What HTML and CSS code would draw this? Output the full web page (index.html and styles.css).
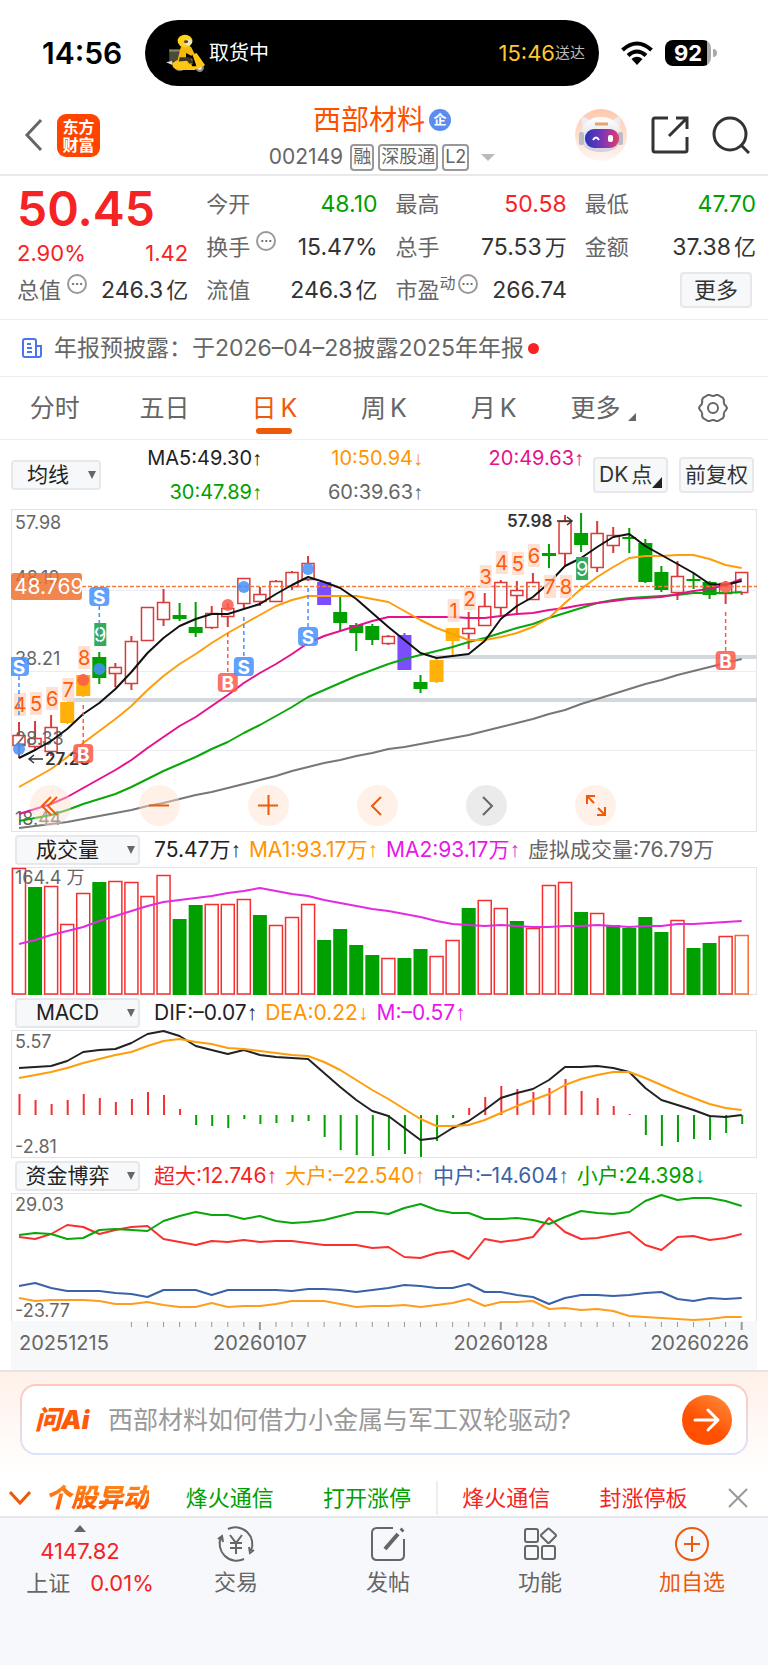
FILE: index.html
```html
<!DOCTYPE html>
<html lang="zh-CN">
<head>
  <meta charset="UTF-8">
  <meta name="viewport" content="width=device-width, initial-scale=1.0">
  <title>西部材料 002149</title>
  <link rel="stylesheet" href="styles.css">
</head>
<body>

  <div class="status-bar">
    <span class="clock">14:56</span>
    <div class="island">
      <svg class="rider" viewBox="0 0 38 54" preserveAspectRatio="none">
        <path d="M4 22h12v17H4z" fill="#4a4a38"/>
        <path d="M4 22h12v3H4z" fill="#8a8462"/>
        <path d="M1 40l6-2v6z" fill="#ddd"/>
        <ellipse cx="14" cy="47" rx="5" ry="6" fill="#666"/>
        <ellipse cx="33" cy="48" rx="4" ry="6" fill="#888"/>
        <ellipse cx="33" cy="48" rx="2" ry="3" fill="#eee"/>
        <path d="M7 41q7-8 16-3l3 8h4l-4-17 4-2 7 15q2 3-1 4l-8 5H13q-7-2-6-10z" fill="#fdc814"/>
        <path d="M15 18q6-5 10 1l3 9-3 3-5-4v8h6v8h-4l-2-5-8-1z" fill="#f4b90c"/>
        <path d="M14 33h10l3 9h-4l-2-4-8 1z" fill="#3a3420"/>
        <ellipse cx="19" cy="10" rx="7" ry="9" fill="#ffd21c"/>
        <path d="M20 8q6-1 6 3-1 5-5 5-4-2-1-8z" fill="#eee7c5"/>
        <circle cx="20" cy="11" r="2" fill="#4d4420"/>
      </svg>
      <span class="island-title">取货中</span>
      <span class="island-time">15:46</span>
      <span class="island-note">送达</span>
    </div>
    <svg class="wifi" viewBox="0 0 32 24">
      <g fill="none" stroke="#000" stroke-width="4">
        <path d="M1.500 9Q16-4 30.500 9"/>
        <path d="M7 14.500Q16 6.500 25 14.500"/>
      </g>
      <path d="M10.500 18Q16 13.500 21.500 18L16 24z"/>
    </svg>
    <div class="battery">92</div>
  </div>

  <header class="header">
    <div class="header-left">
      <button class="icon-button" aria-label="返回">
        <svg width="20" height="34" viewBox="0 0 20 34"><path d="M17 2L3 17l14 15" fill="none" stroke="#666" stroke-width="3"/></svg>
      </button>
      <a class="brand" href="#">东方<br>财富</a>
    </div>
    <div class="stock">
      <h1>西部材料<span class="badge">企</span></h1>
      <div class="code">002149<span class="tag">融</span><span class="tag">深股通</span><span class="tag">L2</span><i class="down"></i></div>
    </div>
    <div class="header-right">
      <button class="icon-button" aria-label="助手">
        <svg width="54" height="56" viewBox="0 0 54 56">
          <defs>
            <linearGradient id="halo" x2="0" y2="1"><stop offset="0" stop-color="#ffc7ac"/><stop offset="1" stop-color="#fff6f2"/></linearGradient>
            <linearGradient id="visor"><stop offset="0" stop-color="#2b35b8"/><stop offset=".5" stop-color="#7a35b8"/><stop offset="1" stop-color="#e83b6c"/></linearGradient>
            <linearGradient id="shell" x2="0" y2="1"><stop offset="0" stop-color="#fff"/><stop offset="1" stop-color="#cfd0dc"/></linearGradient>
          </defs>
          <circle cx="27" cy="28" r="26" fill="url(#halo)"/>
          <path d="M9 22Q6 12 9 9q6 3 9 8zM45 22q3-10 0-13-6 3-9 8z" fill="#ececf3"/>
          <path d="M27 10c13 0 20 8 20 20 0 10-8 15-20 15S7 40 7 30c0-12 7-20 20-20z" fill="url(#shell)"/>
          <rect x="5" y="25" width="5" height="13" rx="2" fill="#b9bbc9"/>
          <rect x="44" y="25" width="5" height="13" rx="2" fill="#b9bbc9"/>
          <path d="M21 17h13" stroke="#e8a468" stroke-width="3"/>
          <rect x="11" y="22" width="34" height="19" rx="9" fill="url(#visor)"/>
          <path d="M19 33q3-5 6 0" fill="none" stroke="#fff" stroke-width="2"/>
          <rect x="34" y="28" width="5" height="7" rx="2" fill="#fff"/>
        </svg>
      </button>
      <button class="icon-button" aria-label="分享">
        <svg width="38" height="38" viewBox="0 0 38 38"><path d="M17 2H4Q2 2 2 4v30q0 2 2 2h30q2 0 2-2V21M25 2h11v11M36 2L18 20" fill="none" stroke="#333" stroke-width="3"/></svg>
      </button>
      <button class="icon-button" aria-label="搜索">
        <svg width="38" height="38" viewBox="0 0 38 38"><circle cx="18" cy="18" r="16" fill="none" stroke="#333" stroke-width="3"/><path d="M29 29l8 8" stroke="#333" stroke-width="3"/></svg>
      </button>
    </div>
  </header>

  <section class="quote">
    <div class="price">
      <strong>50.45</strong>
      <div class="change"><span>2.90%</span><span>1.42</span></div>
    </div>
    <div class="item"><span>今开</span><b class="green">48.10</b></div>
    <div class="item"><span>最高</span><b class="red">50.58</b></div>
    <div class="item"><span>最低</span><b class="green">47.70</b></div>
    <div class="item"><span>换手<i class="hint">···</i></span><b>15.47%</b></div>
    <div class="item"><span>总手</span><b>75.53<em>万</em></b></div>
    <div class="item"><span>金额</span><b>37.38<em>亿</em></b></div>
    <div class="item"><span>总值<i class="hint">···</i></span><b>246.3<em>亿</em></b></div>
    <div class="item"><span>流值</span><b>246.3<em>亿</em></b></div>
    <div class="item"><span>市盈<sup>动</sup><i class="hint tight">···</i></span><b>266.74</b></div>
    <div class="item more"><button class="box-button">更多</button></div>
  </section>

  <a class="report" href="#">
    <svg width="22" height="22" viewBox="0 0 22 22" fill="none" stroke="#4a74f0" stroke-width="2"><path d="M15 20V4q0-2-2-2H4Q2 2 2 4v14q0 2 2 2h14q2 0 2-2V9h-5M6 7h4M6 11h5M6 15h5"/></svg>
    <span>年报预披露：于2026–04–28披露2025年年报</span>
    <i class="dot"></i>
  </a>

  <nav class="tabs">
    <button>分时</button>
    <button>五日</button>
    <button class="active">日<em>K</em></button>
    <button>周<em>K</em></button>
    <button>月<em>K</em></button>
    <button>更多<i class="corner"></i></button>
    <button aria-label="设置">
      <svg width="30" height="30" viewBox="0 0 30 30" fill="none" stroke="#666" stroke-width="2"><path d="M10 2h2q3 2 6 0h2l5 3 1 2q-1 4 2 6l1 2-1 2q-3 2-2 6l-1 2-5 3h-2q-3-2-6 0h-2l-5-3-1-2q1-4-2-6l-1-2 1-2q3-2 2-6l1-2z"/><circle cx="15" cy="15" r="5"/></svg>
    </button>
  </nav>

  <div class="ma-bar">
    <div class="picker small"><select aria-label="主图指标"><option>均线</option></select></div>
    <div class="ma-values">
      <span class="black">MA5:49.30<i>↑</i></span>
      <span class="orange">10:50.94<i>↓</i></span>
      <span class="pink">20:49.63<i>↑</i></span>
      <span class="green">30:47.89<i>↑</i></span>
      <span class="gray">60:39.63<i>↑</i></span>
    </div>
    <button class="box-button dk">DK<em>点</em><i class="corner"></i></button>
    <button class="box-button">前复权</button>
  </div>

  <main class="charts">
    <div class="kline">
      <svg id="kline" viewBox="0 0 746 323"></svg>
      <div class="tools">
        <button aria-label="最早"><svg viewBox="0 0 41 41"><path d="M21 12l-9 9 9 9M27 12l-9 9 9 9"/></svg></button>
        <button aria-label="缩小"><svg viewBox="0 0 41 41"><path d="M10 20.500h20"/></svg></button>
        <button aria-label="放大"><svg viewBox="0 0 41 41"><path d="M10 20.500h20M20.500 10v20"/></svg></button>
        <button aria-label="向左"><svg viewBox="0 0 41 41"><path d="M24 12l-9 9 9 9"/></svg></button>
        <button aria-label="向右" class="off"><svg viewBox="0 0 41 41"><path d="M17 12l9 9-9 9"/></svg></button>
        <button aria-label="全屏"><svg viewBox="0 0 41 41"><path d="M12 19v-8h8M12 11l7 7M30 22v8h-8M30 30l-7-7"/></svg></button>
      </div>
    </div>

    <div class="legend">
      <div class="picker"><select aria-label="副图一"><option>成交量</option></select></div>
      <span class="black">75.47万<i>↑</i></span>
      <span class="orange">MA1:93.17万<i>↑</i></span>
      <span class="magenta">MA2:93.17万<i>↑</i></span>
      <span class="gray">虚拟成交量:76.79万</span>
    </div>
    <svg id="volume" viewBox="0 0 746 128"></svg>

    <div class="legend">
      <div class="picker"><select aria-label="副图二"><option>MACD</option></select></div>
      <span class="black">DIF:–0.07<i>↑</i></span>
      <span class="orange">DEA:0.22<i>↓</i></span>
      <span class="magenta">M:–0.57<i>↑</i></span>
    </div>
    <svg id="macd" viewBox="0 0 746 128"></svg>

    <div class="legend">
      <div class="picker"><select aria-label="副图三"><option>资金博弈</option></select></div>
      <span class="red">超大:12.746<i>↑</i></span>
      <span class="orange">大户:–22.540<i>↑</i></span>
      <span class="blue">中户:–14.604<i>↑</i></span>
      <span class="green">小户:24.398<i>↓</i></span>
    </div>
    <svg id="fund" viewBox="0 0 746 128"></svg>
    <svg id="axis" viewBox="0 0 746 49"></svg>
  </main>

  <section class="ask">
    <form class="ask-box">
      <label for="question">问Ai</label>
      <input id="question" type="text" placeholder="西部材料如何借力小金属与军工双轮驱动?">
      <button type="button" aria-label="提问"><svg width="28" height="28" viewBox="0 0 28 28"><path d="M2 14h23M15 4l10 10-10 10" fill="none" stroke="#fff" stroke-width="3" stroke-linecap="round" stroke-linejoin="round"/></svg></button>
    </form>
  </section>

  <section class="ticker">
    <button class="icon-button" aria-label="收起"><svg width="22" height="14" viewBox="0 0 22 14"><path d="M1 1l10 11L21 1" fill="none" stroke="#ee5a0a" stroke-width="3"/></svg></button>
    <strong>个股异动</strong>
    <a class="ticker-item green" href="#"><span>烽火通信</span><span>打开涨停</span></a>
    <a class="ticker-item red" href="#"><span>烽火通信</span><span>封涨停板</span></a>
    <button class="icon-button close" aria-label="关闭"><svg width="20" height="20" viewBox="0 0 20 20"><path d="M1 1l18 18M19 1L1 19" stroke="#999" stroke-width="2"/></svg></button>
  </section>

  <footer class="bottom">
    <a class="index" href="#">
      <i class="up"></i>
      <span class="red">4147.82</span>
      <span class="index-row"><span>上证</span><span class="red">0.01%</span></span>
    </a>
    <a href="#">
      <svg viewBox="0 0 38 38"><path d="M11 4a17 17 0 0 1 23 22M27 34A17 17 0 0 1 4 12M1 14l4-3 1 6M37 25l-4 3-1-6M13 10l6 8 6-8M19 18v11M13 18h12M13 23h12"/></svg>
      交易
    </a>
    <a href="#">
      <svg viewBox="0 0 38 38"><path d="M24 3H8Q3 3 3 8v22q0 5 5 5h22q5 0 5-5V14"/><path d="M16 24L29 9M32 6l2-2" stroke-width="4"/></svg>
      发帖
    </a>
    <a href="#">
      <svg viewBox="0 0 38 38"><rect x="4" y="4" width="13" height="13" rx="2"/><rect x="4" y="21" width="13" height="13" rx="2"/><rect x="21" y="21" width="13" height="13" rx="2"/><path d="M26.500 4q1-1 2 0l6 5.500q1 1 0 2l-6 6q-1 1-2 0l-6-6q-1-1 0-2z"/></svg>
      功能
    </a>
    <a class="add" href="#">
      <svg viewBox="0 0 38 38"><circle cx="19" cy="19" r="16"/><path d="M11 19h16M19 11v16"/></svg>
      加自选
    </a>
  </footer>

  <script src="charts.js"></script>
</body>
</html>
```

FILE: styles.css
```css
* {
  box-sizing: border-box;
}

body {
  margin: 0;
  min-height: 100vh;
  display: flex;
  flex-direction: column;
  font-family: Inter, 'Noto Sans CJK SC', sans-serif;
  font-size: 22px;
  line-height: 30px;
  color: #333;
  background: #fff;
}

button, select, input {
  font: inherit;
  color: inherit;
  margin: 0;
  padding: 0;
  border: none;
  background: none;
}

a {
  color: inherit;
  text-decoration: none;
}

i, em {
  font-style: normal;
}

svg {
  display: block;
}

.red { color: #f52323; }
.green { color: #00a000; }
.orange { color: #ff9500; }
.pink { color: #e6118c; }
.magenta { color: #e817e8; }
.blue { color: #3a62a8; }
.gray { color: #666; }
.black { color: #222; }

/* Status bar */
.status-bar {
  display: flex;
  align-items: center;
  height: 100px;
  padding: 6px 57px 0 42px;
}

.clock {
  width: 103px;
  font-size: 30px;
  font-weight: 600;
  color: #000;
}

.island {
  flex: 1;
  display: flex;
  align-items: center;
  height: 66px;
  padding: 0 14px 0 20px;
  border-radius: 33px;
  background: #000;
  color: #fff;
  font-size: 20px;
}

.rider {
  width: 40px;
  height: 38px;
  margin-right: 4px;
}

.island-title {
  flex: 1;
}

.island-time {
  font-size: 22px;
  color: #ffc72e;
}

.island-note {
  font-size: 15px;
  color: #bbb;
}

.wifi {
  width: 32px;
  height: 24px;
  margin: 0 12px 0 22px;
}

.battery {
  width: 46px;
  height: 26px;
  border-radius: 8px;
  background: linear-gradient(90deg, #000 92%, #aaa 92%);
  color: #fff;
  font-size: 22px;
  font-weight: 700;
  line-height: 26px;
  text-align: center;
  position: relative;
}

.battery::after {
  content: '';
  position: absolute;
  left: 48px;
  top: 9px;
  width: 4px;
  height: 8px;
  border-radius: 0 4px 4px 0;
  background: #aaa;
}

/* Header */
.header {
  display: grid;
  grid-template-columns: 1fr auto 1fr;
  align-items: center;
  height: 76px;
  padding: 0 18px 0 14px;
  border-bottom: 2px solid #e9e9ea;
}

.icon-button {
  display: block;
  cursor: pointer;
}

.header-left {
  display: flex;
  align-items: center;
  gap: 13px;
  padding: 0 0 4px 10px;
}

.header-right {
  display: flex;
  align-items: center;
  justify-content: flex-end;
  gap: 23px;
  padding-bottom: 4px;
}

.brand {
  width: 43px;
  height: 43px;
  padding-top: 4px;
  border-radius: 9px;
  background: #ff4400;
  color: #fff;
  font-size: 16px;
  font-weight: 700;
  line-height: 18px;
  text-align: center;
}

.stock h1 {
  display: flex;
  align-items: center;
  justify-content: center;
  gap: 4px;
  margin: 0;
  font-size: 28px;
  font-weight: 400;
  line-height: 40px;
  color: #ff4f00;
}

.badge {
  width: 22px;
  height: 22px;
  border-radius: 50%;
  background: #5b8def;
  color: #fff;
  font-size: 13px;
  font-weight: 700;
  line-height: 21px;
  text-align: center;
}

.code {
  display: flex;
  align-items: center;
  justify-content: center;
  gap: 4px;
  height: 34px;
  font-size: 21px;
  color: #666;
}

.tag {
  height: 27px;
  padding: 0 1px;
  border: 2px solid #999;
  border-radius: 4px;
  font-size: 18px;
  line-height: 22px;
}

.tag:first-of-type {
  margin-left: 3px;
}

.down {
  margin-left: 8px;
  border: 7px solid transparent;
  border-top-color: #bbb;
  border-bottom: none;
}

/* Quote */
.quote {
  display: grid;
  grid-template-columns: repeat(4, 1fr);
  grid-auto-rows: 43px;
  column-gap: 18px;
  padding: 6px 12px 8px 17px;
  border-bottom: 1px solid #eee;
}

.price {
  grid-row: span 2;
  color: #f52323;
}

.price strong {
  display: block;
  font-size: 48px;
  font-weight: 600;
  line-height: 54px;
}

.change {
  display: flex;
  justify-content: space-between;
  line-height: 34px;
}

.item {
  display: flex;
  align-items: center;
  justify-content: space-between;
  white-space: nowrap;
}

.item > span {
  display: flex;
  align-items: center;
  color: #666;
}

.item b {
  font-size: 23px;
  font-weight: 400;
}

.item em {
  margin-left: 3px;
  font-size: 22px;
}

.item sup {
  font-size: 16px;
  line-height: 16px;
  margin-bottom: 14px;
  vertical-align: baseline;
}

.hint {
  width: 20px;
  height: 20px;
  margin: 0 0 11px 6px;
  border: 2px solid #999;
  border-radius: 50%;
  font-size: 12px;
  font-weight: 700;
  line-height: 15px;
  text-align: center;
}

.hint.tight {
  margin-left: 2px;
}

.item.more {
  justify-content: flex-end;
  padding-right: 4px;
}

.box-button {
  height: 36px;
  padding: 0 12px;
  border: 2px solid #e6e8ec;
  border-radius: 4px;
  background: #f7f8fa;
  line-height: 30px;
  white-space: nowrap;
  cursor: pointer;
}

/* Report line */
.report {
  display: flex;
  align-items: center;
  height: 57px;
  padding: 0 21px;
  border-bottom: 1px solid #eee;
  font-size: 23px;
  color: #666;
}

.report span {
  margin-left: 11px;
}

.dot {
  width: 11px;
  height: 11px;
  margin-left: 4px;
  border-radius: 50%;
  background: #f52323;
}

/* Period tabs */
.tabs {
  display: grid;
  grid-template-columns: repeat(7, 1fr);
  height: 63px;
  border-bottom: 1px solid #eee;
  font-size: 25px;
  color: #666;
}

.tabs button {
  display: flex;
  align-items: center;
  justify-content: center;
  position: relative;
  cursor: pointer;
}

.tabs em {
  margin-left: 4px;
}

.tabs .active {
  color: #ee5a0a;
}

.tabs .active::after {
  content: '';
  position: absolute;
  left: 50%;
  bottom: 5px;
  width: 36px;
  height: 6px;
  margin-left: -18px;
  border-radius: 3px;
  background: #ee5a0a;
}

.corner {
  align-self: flex-end;
  margin: 0 0 18px 8px;
  border-left: 8px solid transparent;
  border-bottom: 8px solid #666;
}

/* Moving averages */
.ma-bar {
  display: flex;
  align-items: center;
  height: 69px;
  padding: 0 14px 0 11px;
  font-size: 21px;
}

.ma-values {
  flex: 1;
  display: grid;
  grid-template-columns: repeat(3, 1fr);
  row-gap: 4px;
  margin-right: 9px;
  font-size: 20px;
  text-align: right;
}

.ma-values i,
.legend i {
  font-family: 'Liberation Sans', sans-serif;
}

.ma-bar .box-button {
  width: 75px;
  padding: 0;
}

.ma-bar .box-button + .box-button {
  margin-left: 11px;
}

.ma-bar .dk {
  display: flex;
  align-items: center;
  padding-left: 4px;
}

.dk em {
  margin-left: 3px;
}

.dk .corner {
  margin: 0 0 3px 0;
  border-left-width: 10px;
  border-bottom: 11px solid #222;
}

.picker {
  position: relative;
  width: 125px;
  color: #222;
}

.picker.small {
  width: 90px;
}

.picker select {
  display: block;
  width: 100%;
  height: 30px;
  padding-right: 20px;
  border: 2px solid #e6e8ec;
  border-radius: 4px;
  background: #f7f8fa;
  font-size: 21px;
  line-height: 24px;
  text-align: center;
  text-align-last: center;
  appearance: none;
}

.picker.small select {
  padding-right: 16px;
}

.picker::after {
  content: '';
  position: absolute;
  right: 5px;
  top: 11px;
  border: 4px solid transparent;
  border-top: 8px solid #666;
  border-bottom: none;
}

/* Charts */
.charts {
  padding: 0 11px;
}

.charts > svg,
.kline > svg {
  width: 100%;
}

.kline {
  position: relative;
}

.tools {
  position: absolute;
  left: 19px;
  bottom: 6px;
  display: flex;
  gap: 68px;
}

.tools button {
  width: 41px;
  height: 41px;
  border-radius: 50%;
  background: rgba(255, 222, 205, 0.45);
  cursor: pointer;
}

.tools path {
  fill: none;
  stroke: #ee5a0a;
  stroke-width: 2;
}

.tools .off {
  background: rgba(222, 222, 222, 0.6);
}

.tools .off path {
  stroke: #666;
}

.legend {
  display: flex;
  align-items: center;
  gap: 8px;
  height: 35px;
  padding-left: 4px;
  font-size: 21px;
  white-space: nowrap;
}

.legend .picker {
  margin-right: 6px;
}

.frame { fill: none; stroke: #e3e4ea; stroke-width: 1; }
.grid { stroke: #ececf2; stroke-width: 1; }
.support { stroke: #d3d8dc; stroke-width: 4; }
.line { fill: none; stroke-width: 2; stroke-linejoin: round; }
.scale { font-size: 18px; fill: #666; }
.date { font-size: 20px; fill: #666; }
.mark { font-size: 17px; font-weight: 600; fill: #333; }
.count { font-size: 20px; text-anchor: middle; }
.signal { font-size: 19px; font-weight: 700; fill: #fff; text-anchor: middle; }
.cursor { font-size: 21px; fill: #fff; }

/* AI question */
.ask {
  padding: 12px 20px 24px;
  border-top: 2px solid #e4e4e6;
  background: linear-gradient(#fff1ea, #fff);
}

.ask-box {
  display: flex;
  align-items: center;
  height: 71px;
  padding: 0 14px 0 13px;
  border: 2px solid transparent;
  border-radius: 16px;
  background: linear-gradient(#fff, #fff) padding-box, linear-gradient(#ffc8bb, #dbe4fa) border-box;
}

.ask-box label {
  width: 73px;
  font-size: 26px;
  font-style: italic;
  font-weight: 900;
  color: #ff5a0a;
}

.ask-box input {
  flex: 1;
  min-width: 0;
  font-size: 25px;
  outline: none;
}

.ask-box input::placeholder {
  color: #999;
  opacity: 1;
}

.ask-box button {
  display: flex;
  align-items: center;
  justify-content: center;
  width: 50px;
  height: 50px;
  border-radius: 50%;
  background: linear-gradient(215deg, #ff9140, #ff4f00 60%);
  cursor: pointer;
}

/* Ticker */
.ticker {
  display: flex;
  align-items: center;
  height: 37px;
  padding: 0 20px 0 9px;
}

.ticker strong {
  margin: 0 12px 0 14px;
  font-size: 26px;
  font-style: italic;
  font-weight: 900;
  color: transparent;
  background: linear-gradient(#ff8a1c, #ff5200);
  background-clip: text;
  -webkit-background-clip: text;
}

.ticker-item {
  flex: 1;
  display: flex;
  justify-content: space-around;
  height: 34px;
  line-height: 34px;
}

.ticker-item + .ticker-item {
  border-left: 2px solid #eee;
}

.ticker .close {
  margin-left: 16px;
}

/* Bottom bar */
.bottom {
  flex: 1;
  display: flex;
  border-top: 2px solid #e4e6ea;
  background: #f7f8fb;
  color: #666;
}

.bottom a {
  flex: 1;
  display: flex;
  flex-direction: column;
  align-items: center;
  gap: 4px;
  padding: 7px 0 64px;
}

.bottom a > svg {
  width: 38px;
  height: 38px;
  fill: none;
  stroke: #666;
  stroke-width: 2;
}

.bottom .index {
  flex: none;
  width: 160px;
  gap: 0;
}

.up {
  margin-bottom: 4px;
  border: 6px solid transparent;
  border-bottom: 7px solid #666;
  border-top: none;
}

.index-row {
  display: flex;
  gap: 20px;
  margin: 2px 0 0 20px;
}

.bottom .add {
  color: #ee5a0a;
}

.bottom .add svg {
  stroke: #ee5a0a;
}
```

FILE: charts.js
```js
const STEP = 16.06;
const FIRST = 8;
const RED = '#d93a3a';
const COLORS = { r: RED, g: '#00a000', y: '#ffb10a', p: '#7a4dff' };

// high, body top, body bottom, low, kind
const candles = [
  [213, 226, 236, 249, 'r'], [212, 229, 237, 242, 'r'], [206, 218, 242, 247, 'r'],
  [193, 193, 214, 215, 'y'], [165, 166, 187, 188, 'y'], [143, 148, 169, 175, 'g'],
  [154, 158, 164, 178, 'r'], [127, 132, 174, 181, 'r'], [98, 98, 131, 131, 'r'],
  [80, 93, 110, 117, 'r'], [94, 106, 110, 112, 'g'], [93, 118, 124, 128, 'g'],
  [97, 104, 118, 120, 'r'], [94, 99, 107, 118, 'r'], [69, 69, 94, 99, 'r'],
  [78, 85, 92, 97, 'r'], [71, 72, 92, 93, 'r'], [62, 63, 77, 81, 'r'],
  [47, 54, 70, 72, 'r'], [73, 73, 96, 96, 'p'], [88, 103, 114, 122, 'g'],
  [114, 116, 124, 142, 'g'], [115, 117, 131, 136, 'g'], [126, 127, 134, 136, 'r'],
  [124, 126, 161, 161, 'p'], [166, 173, 180, 184, 'g'], [150, 151, 173, 174, 'y'],
  [119, 119, 132, 146, 'y'], [103, 119, 124, 140, 'r'], [84, 97, 116, 116, 'r'],
  [71, 73, 98, 107, 'r'], [72, 81, 86, 106, 'r'], [64, 73, 90, 91, 'r'],
  [35, 44, 47, 59, 'g'], [6, 12, 44, 57, 'r'], [4, 24, 36, 43, 'g'],
  [12, 24, 58, 63, 'r'], [18, 26, 36, 44, 'r'], [19, 28, 30, 44, 'g'],
  [30, 34, 73, 74, 'g'], [57, 63, 81, 83, 'g'], [52, 67, 83, 91, 'r'],
  [64, 70, 72, 80, 'g'], [72, 73, 86, 90, 'g'], [72, 74, 84, 95, 'r'],
  [63, 63, 83, 86, 'r']
];

const ma5 = [249,241,232,220,205,194,180,163,144,129,117,110,105,105,100,95,85,76,68,73,79,90,104,118,131,144,149,147,145,132,110,97,88,74,57,49,38,28,25,37,46,55,64,75,76,72];
const ma10 = [278,269,260,248,234,222,210,197,181,167,155,145,134,124,115,106,97,91,87,87,87,87,90,93,102,111,119,125,131,131,128,124,118,109,94,80,68,58,49,47,47,46,46,50,56,59];
const ma20 = [305,300,295,288,279,270,261,251,239,228,217,208,197,186,174,164,155,145,134,127,122,117,112,108,108,108,108,108,109,109,107,105,104,101,99,96,94,92,90,89,88,85,82,80,76,70];
const ma30 = [312,309,306,301,295,290,285,278,270,262,255,248,240,233,224,216,207,198,188,181,174,167,161,155,150,146,142,138,133,129,124,119,115,109,104,99,94,91,89,88,87,86,84,84,84,83];
const ma60 = [319,317,315,313,310,307,304,301,297,294,290,286,283,279,275,271,267,262,258,254,251,247,244,240,238,235,232,229,226,222,218,214,210,205,201,195,190,185,180,175,171,166,162,158,154,150];

const volumes = [126,107,108,70,101,112,113,112,98,119,75,89,90,90,95,79,69,77,90,54,65,49,39,36,36,45,38,54,86,94,86,73,66,109,112,82,81,69,66,77,62,74,46,51,58,59];
const volumeKinds = 'rgrrrgrrrrggrrrgrrrggggrggrrgrrgrrrgrggggrggro';
const volumeMa = [77,73,68,64,60,54,49,44,39,35,33,31,29,26,24,21,24,27,29,33,36,39,42,44,47,50,54,57,58,59,58,59,60,60,59,59,58,59,60,59,59,57,57,56,55,54];

const hist = [21,15,11,15,21,17,13,16,23,20,6,-10,-11,-13,-4,-9,-8,-7,-6,-22,-35,-40,-41,-35,-39,-42,-26,-3,7,18,29,26,23,27,36,24,17,9,1,-20,-31,-27,-24,-25,-18,-9];
const dif = [38,37,36,31,22,20,19,13,4,1,6,16,20,24,20,25,27,28,29,43,57,70,81,86,98,110,108,98,91,80,68,63,59,50,37,37,36,38,42,58,70,75,80,86,87,85];
const dea = [48,45,42,38,33,29,25,22,16,11,9,12,14,18,19,21,23,25,26,32,40,50,60,69,79,89,96,96,95,90,83,76,70,64,55,49,45,42,42,48,55,62,68,74,78,80];

const small = [42,40,41,46,45,37,36,37,38,28,23,19,22,22,26,23,28,30,29,27,23,19,19,21,15,11,17,20,20,26,26,25,27,31,24,18,20,21,19,8,2,7,5,5,8,13];
const huge = [44,46,41,32,34,41,37,34,33,46,49,52,48,49,47,49,48,48,50,52,52,52,55,54,64,65,60,58,66,46,49,47,44,25,39,46,45,42,39,52,57,44,43,47,45,41];
const middle = [93,90,95,98,98,98,100,101,104,97,97,97,102,97,97,97,97,98,96,96,97,99,97,95,92,93,95,95,91,99,99,102,104,111,105,102,102,103,102,100,99,106,108,105,106,105];
const large = [105,108,107,107,107,108,111,111,109,112,114,114,110,114,113,113,111,108,108,108,111,114,113,113,112,114,112,110,106,113,109,109,108,116,115,117,116,118,123,124,125,126,127,126,124,124];

// index, top, digit
const counts = [
  [0, 184, 4], [1, 183, 5], [2, 178, 6], [3, 169, 7], [4, 137, 8], [5, 114, 9],
  [27, 90, 1], [28, 78, 2], [29, 56, 3], [30, 42, 4], [31, 43, 5], [32, 35, 6],
  [33, 66, 7], [34, 66, 8], [35, 48, 9]
];

// index, letter, tag top, dash start, dash end, dot
const signals = [
  [0, 'S', 148, 167, 206, 240], [5, 'S', 78, 97, 134, 160], [4, 'B', 235, 196, 235, 171],
  [13, 'B', 164, 124, 164, 96], [14, 'S', 148, 108, 148, 78], [18, 'S', 118, 79, 118, 60],
  [44, 'B', 142, 103, 142, 78]
];

const x = i => FIRST + i * STEP;

function line(values, color) {
  const points = values.map((y, i) => `${x(i).toFixed(1)},${y}`).join(' ');
  return `<polyline class="line" points="${points}" stroke="${color}"/>`;
}

function text(cls, px, y, value, extra = '') {
  return `<text class="${cls}" x="${px}" y="${y}" ${extra}>${value}</text>`;
}

function frame(height) {
  return `<rect class="frame" x="0.5" y="0.5" width="745" height="${height}"/>`;
}

function drawKline() {
  let out = frame(322);
  [81, 162, 241].forEach(y => out += `<line class="grid" x1="0" x2="746" y1="${y}.5" y2="${y}.5"/>`);
  out += '<line class="support" x1="56" x2="746" y1="191" y2="191"/><line class="support" x1="424" x2="746" y1="148" y2="148"/>';

  candles.forEach(([high, top, bottom, low, kind], i) => {
    const c = COLORS[kind];
    const body = kind === 'r'
      ? `<rect x="${x(i) - 6}" y="${top + 0.5}" width="12" height="${bottom - top}" fill="none" stroke="${c}" stroke-width="1.5"/>`
      : `<rect x="${x(i) - 7}" y="${top}" width="14" height="${bottom - top}" fill="${c}"/>`;
    out += `<path d="M${x(i)} ${high}V${top}M${x(i)} ${bottom}V${low}" stroke="${c}" stroke-width="2"/>${body}`;
  });

  [[20, '57.98'], [75, '48.10'], [156, '38.21'], [236, '28.33'], [316, '18.44']].forEach(s => out += text('scale', 4, s[0], s[1]));
  out += '<line x1="71" x2="746" y1="77.5" y2="77.5" stroke="#f27a3c" stroke-width="1.5" stroke-dasharray="4 2"/>';
  out += line(ma60, '#777') + line(ma30, '#0aa60a') + line(ma20, '#e6118c') + line(ma10, '#ff9d0a') + line(ma5, '#111');

  counts.forEach(([i, y, n]) => {
    const nine = n === 9;
    out += `<rect x="${x(i) - 5}" y="${y}" width="12" height="23" fill="${nine ? '#33ab5a' : '#ffdccb'}" fill-opacity="${nine ? 1 : 0.85}"/>`;
    out += text('count', x(i) + 1, y + 19, n, `fill="${nine ? '#fff' : '#ff5a0a'}"`);
  });

  out += text('mark', 496, 18, '57.98') + '<path d="M546 12h14M556 8l5 4-5 4" fill="none" stroke="#333" stroke-width="1.5"/>';
  out += text('mark', 34, 256, '27.28') + '<path d="M32 250H18M23 246l-5 4 5 4" fill="none" stroke="#333" stroke-width="1.5"/>';

  signals.forEach(([i, letter, y, from, to, dot]) => {
    const c = letter === 'S' ? '#4590fb' : '#fa5a4b';
    out += `<line x1="${x(i)}" x2="${x(i)}" y1="${from}" y2="${to}" stroke="${c}" stroke-width="1.5" stroke-dasharray="4 3"/>`;
    out += `<circle cx="${x(i)}" cy="${dot}" r="6" fill="${c}" fill-opacity="0.85"/>`;
    out += `<rect x="${x(i) - 10}" y="${y}" width="20" height="19" rx="4" fill="${c}" fill-opacity="0.85"/>`;
    out += text('signal', x(i), y + 17, letter);
  });

  out += '<rect x="0" y="64" width="71" height="27" rx="3" fill="#ee6f2c" fill-opacity="0.84"/>';
  out += text('cursor', 3, 85, '48.769');
  document.getElementById('kline').innerHTML = out;
}

function drawVolume() {
  let out = frame(127);
  volumes.forEach((h, i) => {
    const kind = volumeKinds[i];
    out += kind === 'g'
      ? `<rect x="${x(i) - 7}" y="${127 - h}" width="14" height="${h + 1}" fill="#00a000"/>`
      : `<rect x="${x(i) - 6.5}" y="${127.5 - h}" width="13" height="${h - 0.5}" fill="none" stroke="${kind === 'o' ? '#f9682a' : '#f52f2f'}" stroke-width="1.5"/>`;
  });
  out += line(volumeMa, '#e22be2') + text('scale', 4, 17, '164.4 万');
  document.getElementById('volume').innerHTML = out;
}

function drawMacd() {
  let out = frame(127);
  hist.forEach((h, i) => {
    out += `<line x1="${x(i) + 0.5}" x2="${x(i) + 0.5}" y1="85" y2="${85 - h}" stroke="${h > 0 ? '#f52f2f' : '#00a000'}" stroke-width="2"/>`;
  });
  out += line(dif, '#222') + line(dea, '#ff9d0a');
  out += text('scale', 4, 18, '5.57') + text('scale', 4, 123, '-2.81');
  document.getElementById('macd').innerHTML = out;
}

function drawFund() {
  let out = '<path class="frame" d="M0.5 128V0.5H745.5V128"/>';
  out += line(large, '#ff9d1e') + line(middle, '#3a62a8') + line(huge, '#fa2f2f') + line(small, '#0aa60a');
  out += text('scale', 4, 18, '29.03') + text('scale', 4, 124, '-23.77');
  document.getElementById('fund').innerHTML = out;
}

function drawAxis() {
  let out = '<rect width="746" height="49" fill="#f7f8fa"/>';
  for (let i = 7; i < 46; i++) {
    const big = i % 15 === 0;
    out += `<line x1="${x(i)}" x2="${x(i)}" y1="1" y2="${big ? 9 : 6}" stroke="#999" stroke-width="${big ? 2 : 1}"/>`;
  }
  out += text('date', 8, 29, '20251215');
  out += text('date', x(15), 29, '20260107', 'text-anchor="middle"');
  out += text('date', x(30), 29, '20260128', 'text-anchor="middle"');
  out += text('date', 738, 29, '20260226', 'text-anchor="end"');
  document.getElementById('axis').innerHTML = out;
}

drawKline();
drawVolume();
drawMacd();
drawFund();
drawAxis();
```
